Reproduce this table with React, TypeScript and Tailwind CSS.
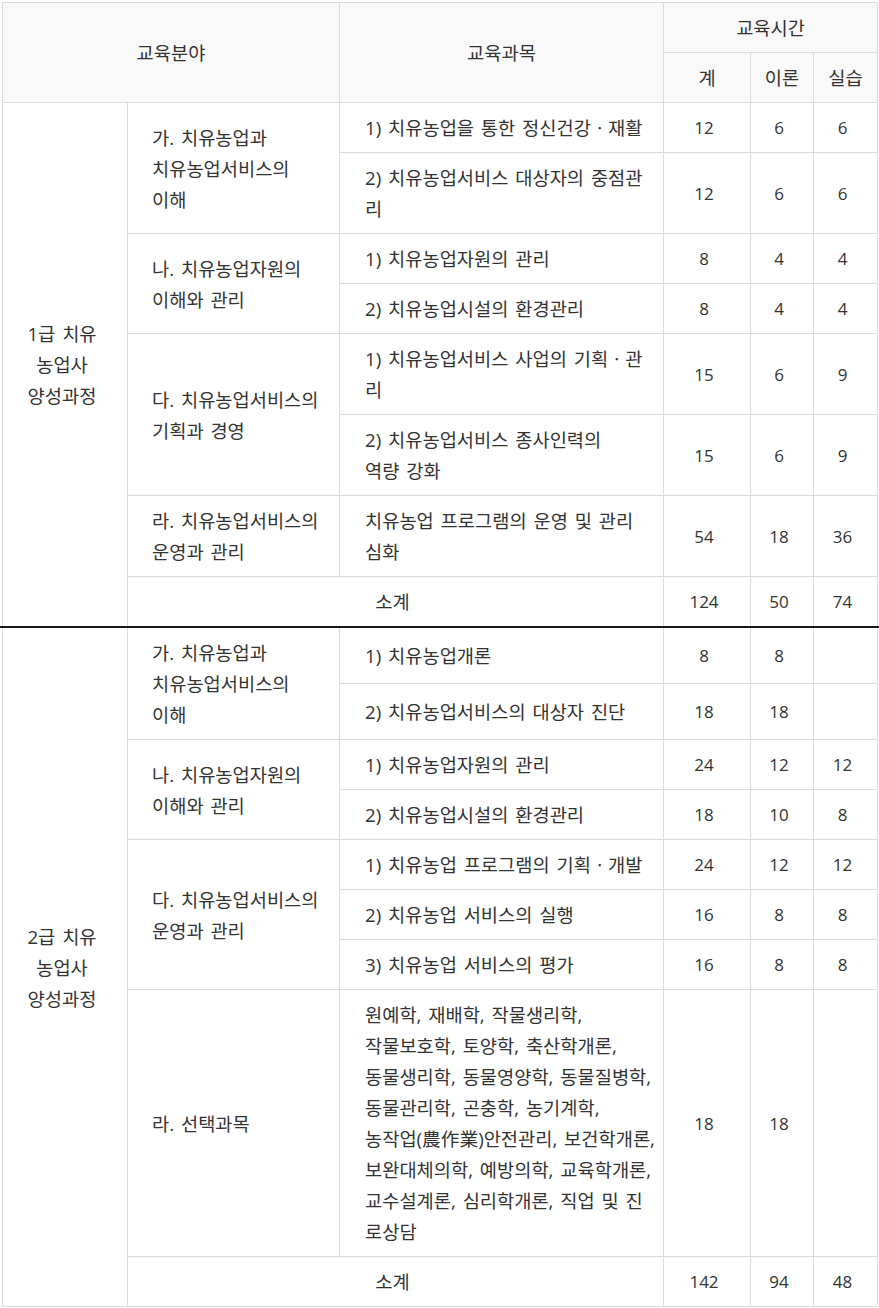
import React from "react";

type Item = { subject: string[]; total: string; theory: string; practice: string; h?: string };
type Group = { name: string[]; items: Item[] };
type Section = { title: string[]; groups: Group[]; sum: [string, string, string] };

const SECTIONS: Section[] = [
  {
    title: ["1급 치유", "농업사", "양성과정"],
    groups: [
      {
        name: ["가. 치유농업과", "치유농업서비스의", "이해"],
        items: [
          { subject: ["1) 치유농업을 통한 정신건강ㆍ재활"], total: "12", theory: "6", practice: "6" },
          { subject: ["2) 치유농업서비스 대상자의 중점관", "리"], total: "12", theory: "6", practice: "6" },
        ],
      },
      {
        name: ["나. 치유농업자원의", "이해와 관리"],
        items: [
          { subject: ["1) 치유농업자원의 관리"], total: "8", theory: "4", practice: "4" },
          { subject: ["2) 치유농업시설의 환경관리"], total: "8", theory: "4", practice: "4" },
        ],
      },
      {
        name: ["다. 치유농업서비스의", "기획과 경영"],
        items: [
          { subject: ["1) 치유농업서비스 사업의 기획ㆍ관", "리"], total: "15", theory: "6", practice: "9" },
          { subject: ["2) 치유농업서비스 종사인력의", "역량 강화"], total: "15", theory: "6", practice: "9" },
        ],
      },
      {
        name: ["라. 치유농업서비스의", "운영과 관리"],
        items: [
          { subject: ["치유농업 프로그램의 운영 및 관리", "심화"], total: "54", theory: "18", practice: "36" },
        ],
      },
    ],
    sum: ["124", "50", "74"],
  },
  {
    title: ["2급 치유", "농업사", "양성과정"],
    groups: [
      {
        name: ["가. 치유농업과", "치유농업서비스의", "이해"],
        items: [
          { subject: ["1) 치유농업개론"], total: "8", theory: "8", practice: "", h: "h-[56px]" },
          { subject: ["2) 치유농업서비스의 대상자 진단"], total: "18", theory: "18", practice: "", h: "h-[56px]" },
        ],
      },
      {
        name: ["나. 치유농업자원의", "이해와 관리"],
        items: [
          { subject: ["1) 치유농업자원의 관리"], total: "24", theory: "12", practice: "12" },
          { subject: ["2) 치유농업시설의 환경관리"], total: "18", theory: "10", practice: "8" },
        ],
      },
      {
        name: ["다. 치유농업서비스의", "운영과 관리"],
        items: [
          { subject: ["1) 치유농업 프로그램의 기획ㆍ개발"], total: "24", theory: "12", practice: "12" },
          { subject: ["2) 치유농업 서비스의 실행"], total: "16", theory: "8", practice: "8" },
          { subject: ["3) 치유농업 서비스의 평가"], total: "16", theory: "8", practice: "8" },
        ],
      },
      {
        name: ["라. 선택과목"],
        items: [
          {
            subject: [
              "원예학, 재배학, 작물생리학,",
              "작물보호학, 토양학, 축산학개론,",
              "동물생리학, 동물영양학, 동물질병학,",
              "동물관리학, 곤충학, 농기계학,",
              "농작업(農作業)안전관리, 보건학개론,",
              "보완대체의학, 예방의학, 교육학개론,",
              "교수설계론, 심리학개론, 직업 및 진",
              "로상담",
            ],
            total: "18",
            theory: "18",
            practice: "",
          },
        ],
      },
    ],
    sum: ["142", "94", "48"],
  },
];

const cell = "border border-[#dcdcdc] py-[9px] align-middle font-normal";
// body cells that are centred sit a few px left of the middle
const mid = `${cell} pl-0 pr-[6px] text-center`;
const num = `${mid} text-[17px]`;

function Lines({ lines }: { lines: string[] }) {
  return (
    <>
      {lines.map((l) => (
        <span key={l} className="block whitespace-nowrap">
          {l}
        </span>
      ))}
    </>
  );
}

function Cols() {
  return (
    <colgroup>
      <col className="w-[125px]" />
      <col className="w-[212px]" />
      <col className="w-[324px]" />
      <col className="w-[87px]" />
      <col className="w-[63px]" />
      <col className="w-[64px]" />
    </colgroup>
  );
}

function SectionRows({ section }: { section: Section }) {
  const count = section.groups.reduce((n, g) => n + g.items.length, 0) + 1;
  const rows: React.ReactNode[] = [];
  section.groups.forEach((g, gi) => {
    g.items.forEach((it, ii) => {
      rows.push(
        <tr key={`${gi}-${ii}`} className={it.h}>
          {gi === 0 && ii === 0 && (
            <td rowSpan={count} className={mid}>
              <Lines lines={section.title} />
            </td>
          )}
          {ii === 0 && (
            <td rowSpan={g.items.length} className={`${cell} pl-6 pr-2 text-left`}>
              <Lines lines={g.name} />
            </td>
          )}
          <td className={`${cell} pl-[25px] pr-2 text-left`}>
            <Lines lines={it.subject} />
          </td>
          <td className={num}>{it.total}</td>
          <td className={num}>{it.theory}</td>
          <td className={num}>{it.practice}</td>
        </tr>
      );
    });
  });
  rows.push(
    <tr key="sum">
      <td colSpan={2} className={mid}>
        소계
      </td>
      <td className={num}>{section.sum[0]}</td>
      <td className={num}>{section.sum[1]}</td>
      <td className={num}>{section.sum[2]}</td>
    </tr>
  );
  return <tbody>{rows}</tbody>;
}

export default function App() {
  const table =
    "ml-[2px] w-[875px] table-fixed border-collapse text-[18.7px] leading-[31px] text-[#333] [word-spacing:2px]";
  const head = `${cell} bg-[#f9f9f9] text-center`;
  return (
    <div className="w-[879px] bg-white pt-[2px] font-['Open_Sans','Noto_Sans_CJK_KR',sans-serif]">
      <table className={table}>
        <Cols />
        <thead>
          <tr className="h-[49px]">
            <th colSpan={2} rowSpan={2} className={head}>
              교육분야
            </th>
            <th rowSpan={2} className={head}>
              교육과목
            </th>
            <th colSpan={3} className={head}>
              교육시간
            </th>
          </tr>
          <tr className="h-[50px]">
            <th className={head}>계</th>
            <th className={head}>이론</th>
            <th className={head}>실습</th>
          </tr>
        </thead>
        <SectionRows section={SECTIONS[0]} />
      </table>
      <div className="relative z-10 -my-px h-[2px] bg-[#1a1a1a]" />
      <table className={table}>
        <Cols />
        <SectionRows section={SECTIONS[1]} />
      </table>
    </div>
  );
}
